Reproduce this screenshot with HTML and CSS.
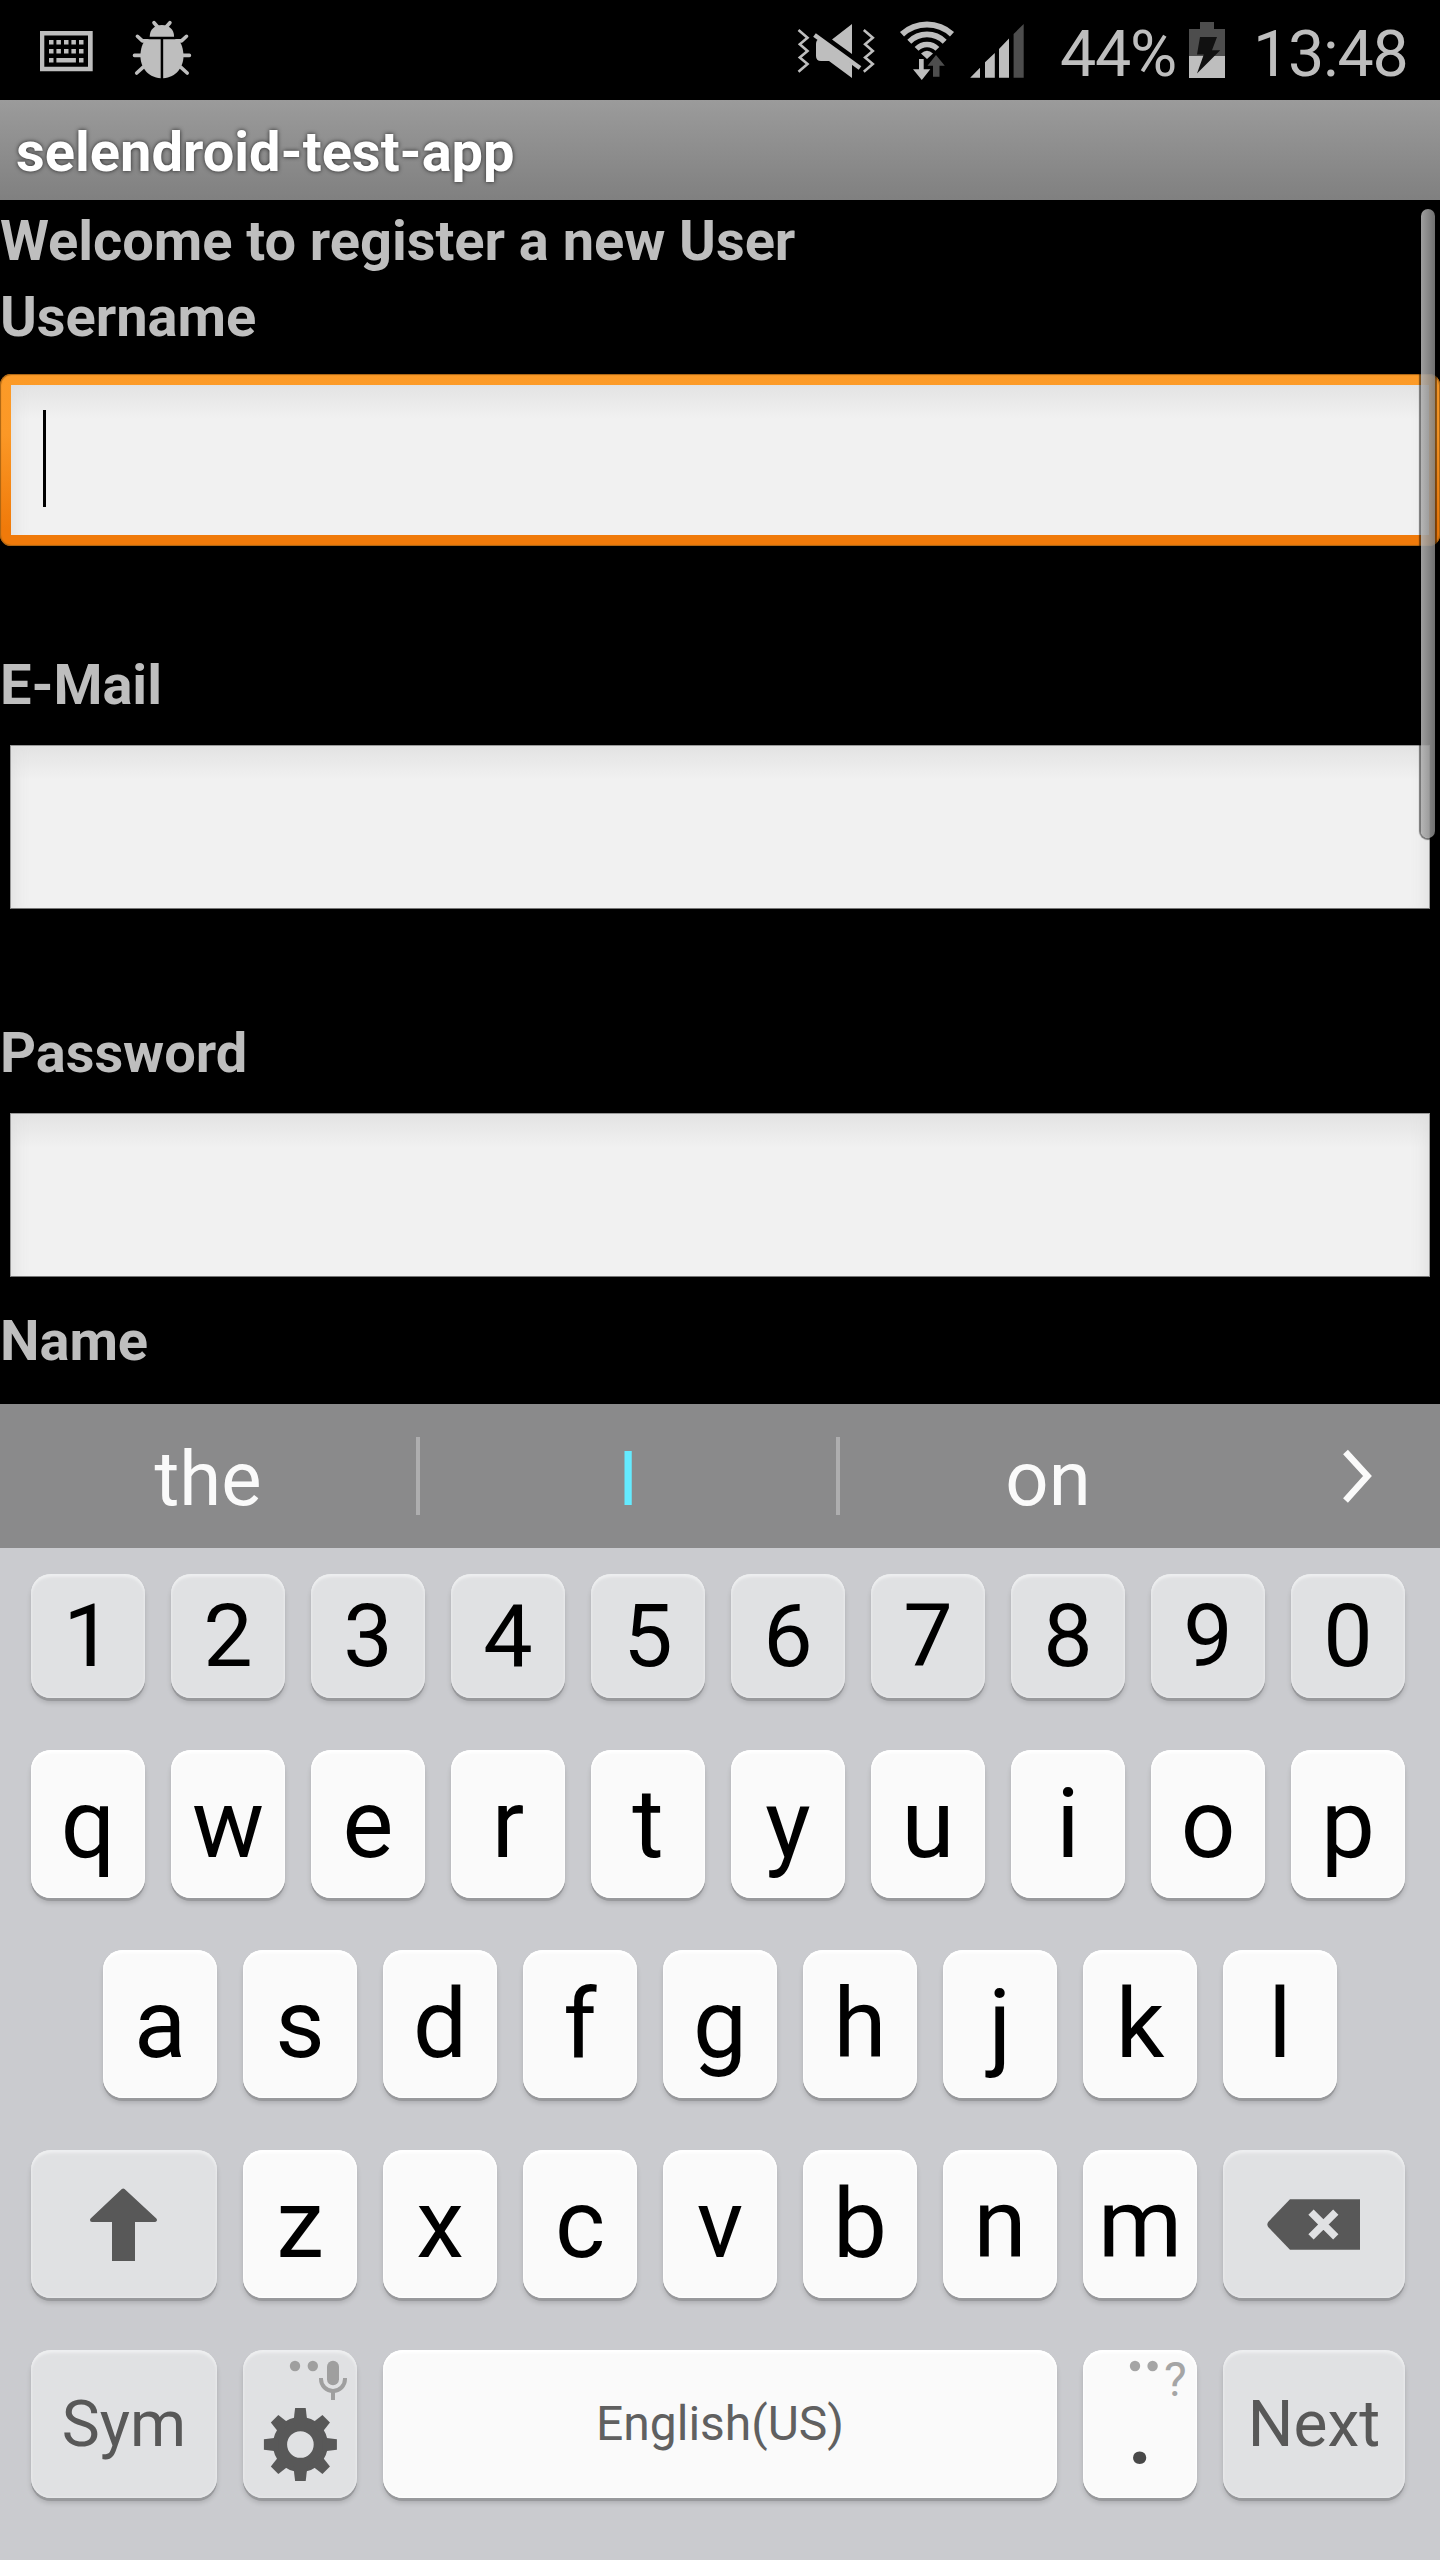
FILE: index.html
```html
<!DOCTYPE html>
<html lang="en">
<head>
<meta charset="utf-8">
<title>selendroid-test-app</title>
<link rel="stylesheet" href="styles.css">
</head>
<body>
<div class="screen">
  <header class="status">
    <svg class="icon icon-keyboard" width="54" height="100" viewBox="40 0 54 100">
      <path fill="#bebebe" fill-rule="evenodd" d="M40 31H92.700V71.300H40ZM44.300 35.500V66.800H88V35.500Z"/>
      <path fill="#bebebe" d="M49 40h4.500v4.500H49zM56.400 40h4.500v4.500h-4.500zM64 40h4.500v4.500H64zM71.400 40h4.500v4.500h-4.500zM79 40h4.500v4.500H79zM49 49h4.500v4.500H49zM56.400 49h4.500v4.500h-4.500zM64 49h4.500v4.500H64zM71.400 49h4.500v4.500h-4.500zM79 49h4.500v4.500H79zM49 58h4.500v4.500H49zM56.400 58h19.500v4.500H56.400zM79 58h4.500v4.500H79z"/>
    </svg>
    <svg class="icon icon-bug" width="60" height="100" viewBox="132.300 0 60 100">
      <g fill="#bebebe">
        <path d="M150 36.700C150 29.500 155 25 162.200 25S174.400 29.500 174.400 36.700Z"/>
        <path d="M146 39.300H161V78.200C148 77.500 140.700 67 140.700 56C140.700 49 143 43 146 39.300Z"/>
        <path d="M178.500 39.300H163.500V78.200C176.500 77.500 183.800 67 183.800 56C183.800 49 181.500 43 178.500 39.300Z"/>
      </g>
      <path fill="none" stroke="#bebebe" stroke-width="3.600" stroke-linecap="round" stroke-linejoin="round" d="M154.300 22.700l3.500 4M170.200 22.700l-3.500 4M137.700 36.300l5 4.600h5M186.800 36.300l-5 4.600h-5M134.800 55.400h7M189.700 55.400h-7M137 73l6.500-5.800M187.500 73l-6.500-5.800"/>
    </svg>
    <svg class="icon icon-mute" width="80" height="100" viewBox="796 0 80 100">
      <path fill="none" stroke="#bebebe" stroke-width="2.600" d="M798.500 30l9 7.700-7.700 6.600 7.700 6.700-7.700 6.500 7.700 6.500-9 7.700M863.800 30l9 7.700-7.700 6.600 7.700 6.700-7.700 6.500 7.700 6.500-9 7.700"/>
      <path fill="#bebebe" d="M852 24V54L832 39.500ZM819 39L852 64V78L829 61H821Q816 61 816 56V44Q816 40 819 39Z"/>
      <path stroke="#bebebe" stroke-width="4.500" d="M814.500 35L860 68"/>
    </svg>
    <svg class="icon icon-wifi" width="56" height="100" viewBox="899 0 56 100">
      <g fill="none" stroke="#bebebe">
        <path stroke-width="6" d="M902 34.200A37 37 0 0 1 952 34.200"/>
        <path stroke-width="5.600" d="M909.300 41.700A25 25 0 0 1 944.700 41.700"/>
        <path stroke-width="5.400" d="M916.600 48.900A14.500 14.500 0 0 1 937.400 48.900"/>
      </g>
      <path fill="#bebebe" d="M921 53.500Q927 48.200 933 53.500L927 59ZM919 59H923.700V69.300H930.300L921.800 80L913 69.300H919Z"/>
      <path fill="#4d4d4d" d="M936 55L944.800 65.700H939.500V76.700H933V65.700H927.500Z"/>
    </svg>
    <svg class="icon icon-signal" width="56" height="100" viewBox="969 0 56 100">
      <path fill="#bebebe" d="M970.200 77.700L980 67.700V77.700ZM985 77.700V62.300L994.800 53V77.700ZM999 77.700V49L1009 38.500V77.700Z"/>
      <path fill="#4d4d4d" d="M1013.600 77.700V34L1023.700 24V77.700Z"/>
    </svg>
    <span class="status-text battery-level">44%</span>
    <svg class="icon icon-battery" width="36" height="100" viewBox="1189 0 36 100">
      <path fill="#4d4d4d" d="M1200 22H1214V29H1225V56H1189V29H1200Z"/>
      <path fill="#bebebe" d="M1189 56H1225V78H1189Z"/>
      <path fill="#111" d="M1200 37H1217L1212 50.300H1220.200L1197 73.500L1203.800 54.500H1197Z"/>
    </svg>
    <span class="status-text clock">13:48</span>
  </header>

  <h1 class="title">selendroid-test-app</h1>

  <main class="form">
    <div class="label">Welcome to register a new User</div>
    <div class="label">Username</div>
    <div class="field-focus"><div class="field field-active"><div class="caret"></div></div></div>
    <div class="label label-email">E-Mail</div>
    <div class="field"></div>
    <div class="label label-password">Password</div>
    <div class="field"></div>
    <div class="label label-name">Name</div>
    <div class="scrollbar"></div>
  </main>

  <section class="suggestions">
    <div class="suggestion">the</div>
    <div class="divider"></div>
    <div class="suggestion suggestion-main">I</div>
    <div class="divider"></div>
    <div class="suggestion">on</div>
    <svg class="chevron" width="184" height="144" viewBox="1256 1404 184 144"><path fill="none" stroke="#fafafa" stroke-width="6.500" d="M1345.500 1452L1367.500 1476L1345.500 1500.500"/></svg>
  </section>

  <section class="keyboard">
    <div class="row row-digits">
      <div class="key soft">1</div><div class="key soft">2</div><div class="key soft">3</div><div class="key soft">4</div><div class="key soft">5</div><div class="key soft">6</div><div class="key soft">7</div><div class="key soft">8</div><div class="key soft">9</div><div class="key soft">0</div>
    </div>
    <div class="row">
      <div class="key">q</div><div class="key">w</div><div class="key">e</div><div class="key">r</div><div class="key">t</div><div class="key">y</div><div class="key">u</div><div class="key">i</div><div class="key">o</div><div class="key">p</div>
    </div>
    <div class="row row-home">
      <div class="key">a</div><div class="key">s</div><div class="key">d</div><div class="key">f</div><div class="key">g</div><div class="key">h</div><div class="key">j</div><div class="key">k</div><div class="key">l</div>
    </div>
    <div class="row">
      <div class="key soft key-left">
        <svg width="186" height="148" viewBox="31 2150 186 148"><path fill="#585858" stroke="#585858" stroke-width="4" stroke-linejoin="round" d="M123.200 2190.500L155 2220H92Z"/><path fill="#585858" d="M112 2218H135V2261H112Z"/></svg>
      </div>
      <div class="key">z</div><div class="key">x</div><div class="key">c</div><div class="key">v</div><div class="key">b</div><div class="key">n</div><div class="key">m</div>
      <div class="key soft key-right">
        <svg width="182" height="148" viewBox="1223 2150 182 148"><path fill="#585858" d="M1290 2199.200H1360V2249.800H1290L1268.200 2227Q1266.500 2224.500 1268.200 2222Z"/><path stroke="#e0e1e3" stroke-width="7.500" d="M1311 2212.200L1335.800 2236.800M1335.800 2212.200L1311 2236.800"/></svg>
      </div>
    </div>
    <div class="row">
      <div class="key soft key-left key-word">Sym</div>
      <div class="key soft">
        <svg width="114" height="148" viewBox="243 2350 114 148">
          <g fill="#9f9f9f"><circle cx="295" cy="2366" r="5.200"/><circle cx="312.800" cy="2366" r="5.200"/><rect x="327" y="2360.700" width="12" height="24.500" rx="6"/><path d="M331 2391h4v9h-4z"/></g>
          <path fill="none" stroke="#9f9f9f" stroke-width="4" d="M321 2378V2379A12 12 0 0 0 345 2379V2378"/>
          <g fill="#585858" transform="translate(300.400 2444.500)">
            <path fill-rule="evenodd" d="M-27.500 0A27.500 27.500 0 1 0 27.500 0A27.500 27.500 0 1 0 -27.500 0ZM-13.300 0A13.300 13.300 0 1 1 13.300 0A13.300 13.300 0 1 1 -13.300 0Z"/>
            <g id="teeth"><path id="tooth" d="M-5.300-36.500H5.300L7-22H-7Z"/><use href="#tooth" transform="rotate(90)"/><use href="#tooth" transform="rotate(180)"/><use href="#tooth" transform="rotate(270)"/></g>
            <use href="#teeth" transform="rotate(45)"/>
          </g>
        </svg>
      </div>
      <div class="key key-space">English(US)</div>
      <div class="key key-dot">
        <svg class="more" width="32" height="12" viewBox="0 0 32 12"><circle cx="6" cy="6" r="5.200" fill="#a5a5a5"/><circle cx="23.600" cy="6" r="5.200" fill="#a5a5a5"/></svg>
        <span class="alt">?</span>
        <span class="period">.</span>
      </div>
      <div class="key soft key-right key-word">Next</div>
    </div>
  </section>
</div>
</body>
</html>
```
FILE: styles.css
```css
* { box-sizing: border-box; }
body { margin: 0; background: #000; font-family: Roboto, sans-serif; }
svg { display: block; flex: none; }
.screen { width: 1440px; height: 2560px; overflow: hidden; display: flex; flex-direction: column; }

/* Status bar */
.status { height: 100px; flex: none; display: flex; background: #000; color: #bebebe; }
.icon-keyboard { margin-left: 40px; }
.icon-bug { margin-left: 38.3px; }
.icon-mute { margin-left: 603.7px; }
.icon-wifi { margin-left: 23px; }
.icon-signal { margin-left: 14px; }
.status-text { flex: none; font-size: 64.5px; line-height: 100px; letter-spacing: -1.2px; padding-top: 4px; white-space: nowrap; }
.battery-level { width: 130px; margin-left: 34px; padding-left: 1px; }
.clock { padding-left: 28px; }

.title { height: 100px; flex: none; margin: 0; padding: 2px 0 0 16px; background: linear-gradient(#9b9b9b, #808080); color: #fff; font-size: 56px; line-height: 100px; text-shadow: 0 0 4px rgba(0, 0, 0, .75); }

/* Registration form */
.form { position: relative; height: 1204px; flex: none; padding-top: 3px; color: #bebebe; }
.label { height: 76px; font-size: 56px; font-weight: 700; line-height: 76px; letter-spacing: -.05px; }
.label-email { margin-top: 101px; }
.label-password { margin-top: 107px; }
.label-name { margin-top: 27px; }
.field { height: 164px; margin: 22px 10px -1px; background: linear-gradient(#e3e3e3, #f1f1f1 34px); border: 1px solid #999; border-bottom-color: #777; box-shadow: inset 18px 0 18px -16px #ddd, inset -18px 0 18px -16px #ddd; }
.field-focus { height: 172px; margin-top: 19px; padding: 11px; border-radius: 11px; background: linear-gradient(#fc9b28, #fb9826 35%, #f07a0a 90%); box-shadow: inset 0 0 1px 1px #a86414; }
.field-active { height: 150px; margin: 0; border: 0; padding: 25px 0 0 32px; }
.caret { width: 3px; height: 97px; background: #000; }
.scrollbar { position: absolute; right: 5px; top: 9px; width: 14px; height: 629px; border-radius: 7px; background: linear-gradient(90deg, rgba(176, 176, 176, .9), rgba(128, 128, 128, .88)); box-shadow: 0 0 1px 2px rgba(0, 0, 0, .5); }

/* Word suggestions */
.suggestions { height: 144px; flex: none; display: flex; align-items: center; background: #8a8a8b; color: #fafafa; }
.suggestion { width: 416px; padding-top: 6px; text-align: center; font-size: 76px; line-height: 138px; }
.suggestion-main { color: #64ebff; }
.divider { width: 4px; height: 78px; background: #aeaeaf; }

/* Keys */
.keyboard { flex: 1; padding: 26px 31px 0; background: #cacbcf; color: #000; }
.row { display: flex; gap: 26px; height: 148px; margin-bottom: 52px; }
.row-digits { height: 124px; font-size: 88px; }
.row-home { padding-left: 72px; }
.key { width: 114px; flex: none; height: 148px; border-radius: 20px; background: #fafafa; text-align: center; font-size: 96px; line-height: 148px; box-shadow: inset 0 4px 3px -1px #fff, inset 0 0 2px 1px #fff, 0 3px 0 #98999c, 0 5px 5px rgba(0, 0, 0, .15); }
.soft { background: #e0e1e3; box-shadow: inset 0 4px 3px -1px #eeeff0, inset 0 0 2px 1px #e7e8ea, 0 3px 0 #98999c, 0 5px 5px rgba(0, 0, 0, .15); }
.row-digits .key { height: 124px; font-size: 88px; line-height: 124px; }
.key-left { width: 186px; }
.key-right { width: 182px; }
.row .key-word { font-size: 64px; line-height: 150px; color: #585858; }
.row .key-space { width: 674px; font-size: 48px; color: #606060; }
.key-dot { position: relative; }
.more { position: absolute; left: 46px; top: 10px; }
.alt { position: absolute; left: 81px; top: 0; font-size: 48px; line-height: 60px; color: #a5a5a5; }
.period { display: block; padding-top: 6px; font-weight: 500; color: #484848; }
```
